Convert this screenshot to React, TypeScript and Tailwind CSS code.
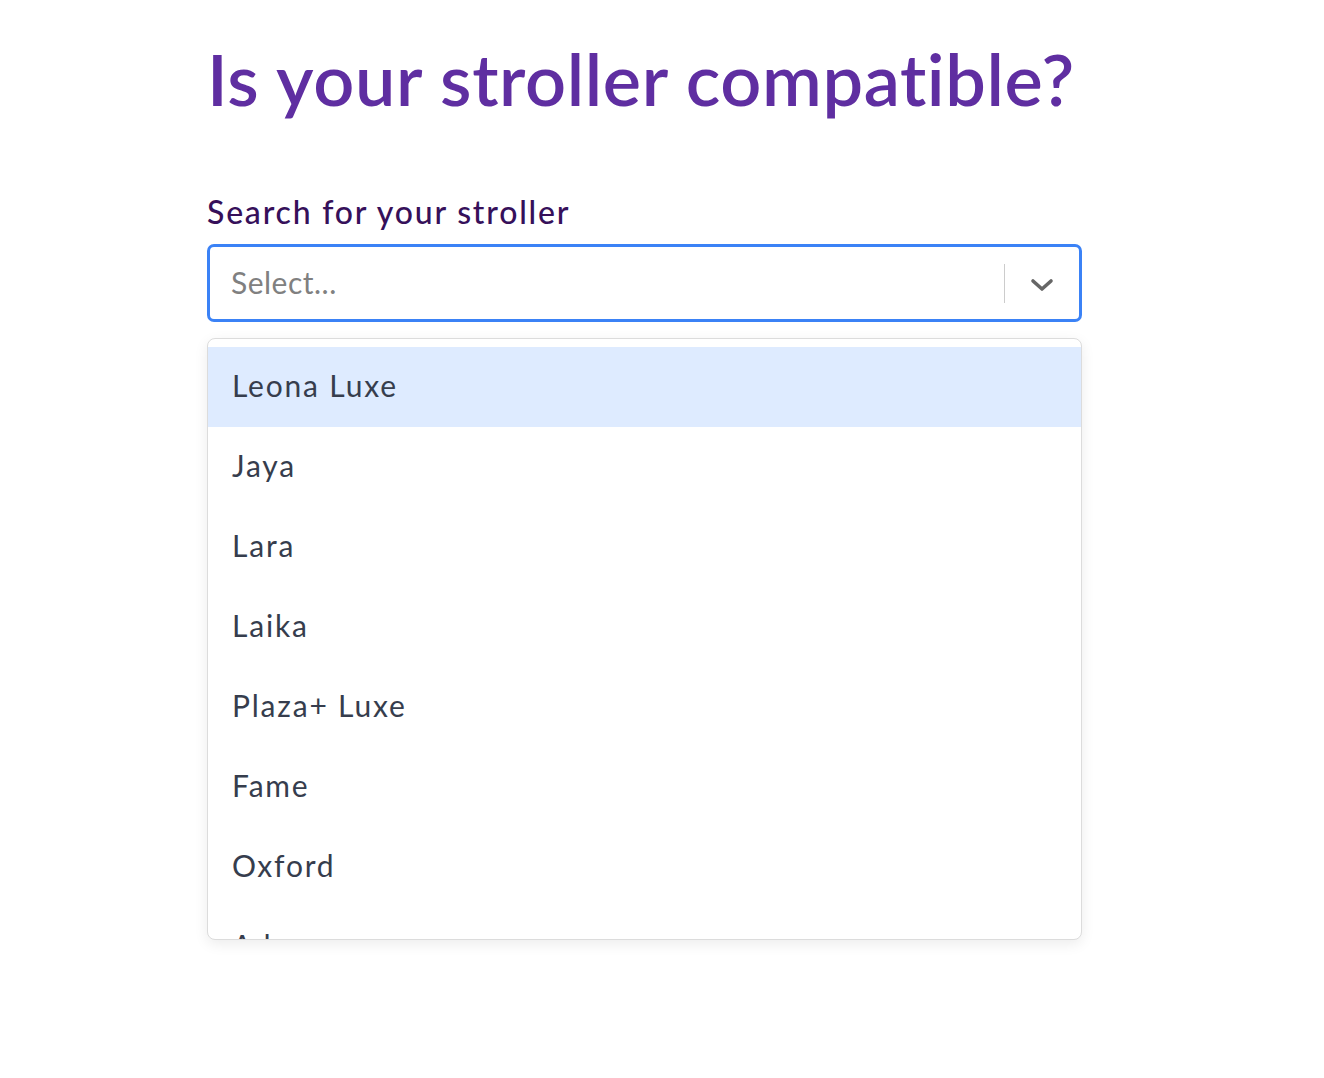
const strollers = ['Leona Luxe', 'Jaya', 'Lara', 'Laika', 'Plaza+ Luxe', 'Fame', 'Oxford', 'Adora'];

export default function App() {
  return (
    <div className="min-h-screen bg-white font-['Lato',sans-serif]">
      <div className="w-[875px] ml-[207px] pt-[33px]">
        <h1 className="whitespace-nowrap text-[72px] leading-[90px] font-semibold text-[#5f2ea1] tracking-[0.6px]">
          Is your stroller compatible?
        </h1>

        <label className="block mt-[69px] text-[32px] leading-[40px] font-medium text-[#36105a] tracking-[1.8px]">
          Search for your stroller
        </label>

        <div className="mt-[12px] h-[78px] flex items-center border-[3px] border-[#3b82f6] rounded-[7px] bg-white">
          <div className="flex-1 pl-[21px] pb-[2px] text-[30px] text-[#808080] tracking-[0.5px]">Select...</div>
          <div className="h-[39px] w-px bg-[#cccccc]"></div>
          <div className="w-[74px] flex items-center justify-center pt-[4px]">
            <svg width="24" height="16" viewBox="0 0 24 16" fill="none" stroke="#666666" strokeWidth="3.6" strokeLinecap="round" strokeLinejoin="round">
              <polyline points="3,4 12,12 21,4" />
            </svg>
          </div>
        </div>

        <div className="mt-[16px] h-[602px] overflow-hidden rounded-[8px] border border-[#dcdcdc] bg-white shadow-[0_4px_14px_rgba(0,0,0,0.08)]">
          <ul className="pt-[8px]">
            {strollers.map((name, i) => (
              <li
                key={name}
                className={
                  i === 0
                    ? 'h-[80px] flex items-center pl-[24px] pb-[3px] text-[30px] text-[#363d4d] tracking-[1.8px] bg-[#deebff]'
                    : 'h-[80px] flex items-center pl-[24px] pb-[3px] text-[30px] text-[#363d4d] tracking-[1.8px]'
                }
              >
                {name}
              </li>
            ))}
          </ul>
        </div>
      </div>
    </div>
  );
}
